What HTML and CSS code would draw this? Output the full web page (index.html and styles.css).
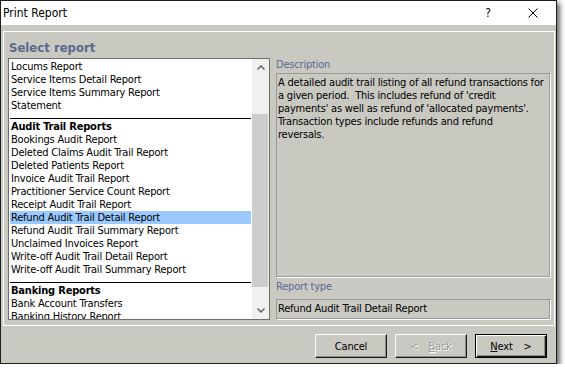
FILE: index.html
```html
<!DOCTYPE html>
<html>
<head>
<meta charset="utf-8">
<link rel="stylesheet" href="styles.css">
</head>
<body>
<div class="window">
  <div class="titlebar">
    <span class="title">Print Report</span>
    <span class="help">?</span>
    <svg class="close" width="10" height="10" viewBox="0 0 10 10"><path d="M0.5 0.5 L9.5 9.5 M9.5 0.5 L0.5 9.5" stroke="#000" stroke-width="1" fill="none"/></svg>
  </div>
  <div class="panel">
    <div class="heading">Select report</div>
    <div class="body">
      <div class="list">
        <div class="items">
          <div class="item">Locums Report</div>
          <div class="item">Service Items Detail Report</div>
          <div class="item">Service Items Summary Report</div>
          <div class="item">Statement</div>
          <div class="sep"></div>
          <div class="item group">Audit Trail Reports</div>
          <div class="item">Bookings Audit Report</div>
          <div class="item">Deleted Claims Audit Trail Report</div>
          <div class="item">Deleted Patients Report</div>
          <div class="item">Invoice Audit Trail Report</div>
          <div class="item">Practitioner Service Count Report</div>
          <div class="item">Receipt Audit Trail Report</div>
          <div class="item selected">Refund Audit Trail Detail Report</div>
          <div class="item">Refund Audit Trail Summary Report</div>
          <div class="item">Unclaimed Invoices Report</div>
          <div class="item">Write-off Audit Trail Detail Report</div>
          <div class="item">Write-off Audit Trail Summary Report</div>
          <div class="sep"></div>
          <div class="item group">Banking Reports</div>
          <div class="item">Bank Account Transfers</div>
          <div class="item">Banking History Report</div>
        </div>
        <div class="scrollbar">
          <div class="sb-btn"><svg width="8" height="5" viewBox="0 0 8 5"><path d="M0.5 4.5 L4 1 L7.5 4.5" stroke="#606060" stroke-width="1.4" fill="none"/></svg></div>
          <div class="track"><div class="thumb"></div></div>
          <div class="sb-btn"><svg width="8" height="5" viewBox="0 0 8 5"><path d="M0.5 0.5 L4 4 L7.5 0.5" stroke="#606060" stroke-width="1.4" fill="none"/></svg></div>
        </div>
      </div>
      <div class="details">
        <div class="label">Description</div>
        <div class="desc">A detailed audit trail listing of all refund transactions for<br>a given period.&nbsp; This includes refund of 'credit<br>payments' as well as refund of 'allocated payments'.<br>Transaction types include refunds and refund<br>reversals.</div>
        <div class="label label-type">Report type</div>
        <div class="type">Refund Audit Trail Detail Report</div>
      </div>
    </div>
  </div>
  <div class="buttons">
    <div class="btn">Cancel</div>
    <div class="btn disabled"><span class="arrow">&lt;</span><u>B</u>ack</div>
    <div class="btn default"><u>N</u>ext<span class="arrow-r">&gt;</span></div>
  </div>
</div>
</body>
</html>
```
FILE: styles.css
```css
* { box-sizing: border-box; }
html, body { margin: 0; padding: 0; background: #fff; }
body {
  font-family: "DejaVu Sans Condensed", "DejaVu Sans", sans-serif;
  font-size: 11px;
  letter-spacing: -0.2px;
  color: #000;
}
.window {
  width: 557px;
  height: 364px;
  border: 1px solid #1e1e1e;
  background: #c9c8c1;
  box-shadow: 3px 3px 5px rgba(0,0,0,0.6);
  display: flex;
  flex-direction: column;
}
.titlebar {
  height: 24px;
  background: #fff;
  display: flex;
  align-items: center;
  padding-left: 2px;
  font-size: 12px;
  letter-spacing: 0;
}
.title { flex: 1; }
.help { margin-right: 37px; font-size: 12px; }
.close { margin-right: 18px; display: block; }
.panel {
  margin: 6px 1px 0 2px;
  height: 295px;
  border: 1px solid #fff;
  padding: 8px 4px 0 4px;
  display: flex;
  flex-direction: column;
}
.heading {
  height: 18px;
  padding-left: 1px;
  font-weight: bold;
  font-size: 13px;
  line-height: 16px;
  letter-spacing: 0;
  color: #5a6a8e;
}
.body { display: flex; gap: 6px; }
.list {
  flex: 0 0 262px;
  width: 262px;
  height: 262px;
  border: 1px solid #6e6e6e;
  background: #fff;
  display: flex;
  overflow: hidden;
}
.items {
  flex: 1;
  padding: 1px 1px 0 1px;
  overflow: hidden;
  white-space: nowrap;
}
.item {
  height: 13px;
  line-height: 13px;
  padding-left: 1px;
}
.item.group { font-weight: bold; }
.item.selected { background: #99c9ff; }
.sep {
  height: 1px;
  background: #000;
  margin: 6px 0 1px 0;
}
.scrollbar {
  width: 17px;
  flex: 0 0 17px;
  background: #f0f0f0;
  display: flex;
  flex-direction: column;
}
.sb-btn {
  height: 17px;
  display: flex;
  align-items: center;
  justify-content: center;
}
.sb-btn svg { display: block; }
.track { flex: 1; padding-top: 38px; }
.thumb {
  height: 173px;
  margin: 0 1px 0 0;
  background: #cdcdcd;
}
.details {
  flex: 1;
  min-width: 0;
  display: flex;
  flex-direction: column;
}
.label {
  height: 15px;
  line-height: 13px;
  color: #5a6a96;
}
.label-type { margin-top: 3px; height: 19px; }
.desc {
  height: 204px;
  border: 1px solid #9a9a9a;
  box-shadow: 1px 1px 0 #fff;
  padding: 2px 0 0 1px;
  line-height: 13px;
  white-space: nowrap;
  overflow: hidden;
}
.type {
  height: 20px;
  border: 1px solid #9a9a9a;
  box-shadow: 1px 1px 0 #fff;
  padding: 1px 0 0 1px;
  line-height: 15px;
  white-space: nowrap;
}
.buttons {
  margin-top: 8px;
  padding-right: 9px;
  display: flex;
  justify-content: flex-end;
  gap: 8px;
}
.btn {
  width: 72px;
  height: 24px;
  border: 1px solid;
  border-color: #fff #1a1a1a #1a1a1a #fff;
  box-shadow: inset -1px -1px 0 #8a8a8a;
  display: flex;
  align-items: center;
  justify-content: center;
  line-height: 13px;
}
.btn.disabled {
  color: #9d9d9d;
  text-shadow: 1px 1px 0 #fff;
}
.btn.default {
  border: 1px solid #000;
  box-shadow: inset 1px 1px 0 #fff, inset -1px -1px 0 #1a1a1a, inset -2px -2px 0 #8a8a8a;
}
.arrow { margin-right: 10px; }
.arrow-r { margin-left: 11px; }
u { text-decoration: underline; }
```
